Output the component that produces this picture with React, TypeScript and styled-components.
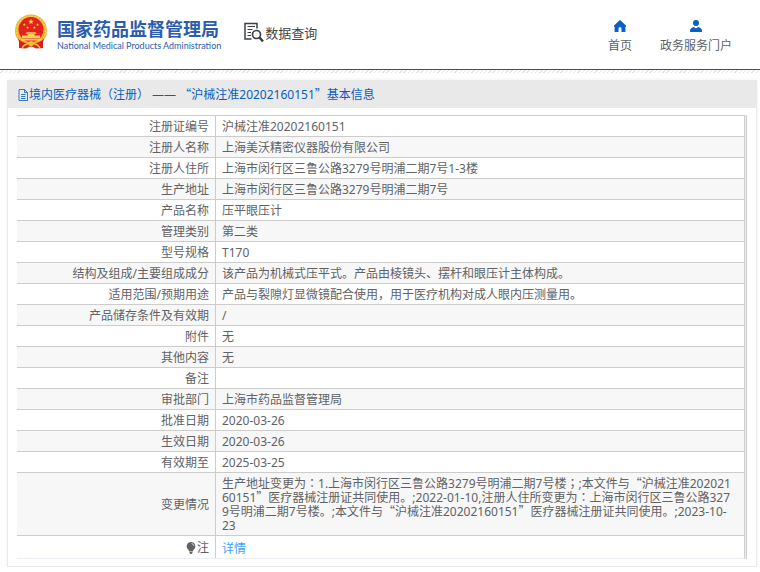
import React from 'react';
import styled, { createGlobalStyle } from 'styled-components';

const GlobalStyle = createGlobalStyle`
  * { box-sizing: border-box; }
  body {
    margin: 0;
    background: #fff;
    color: #606266;
    font: 12px/14px "Noto Sans", "Noto Sans CJK SC", sans-serif;
  }
  a { text-decoration: none; }
`;

const Header = styled.header`
  display: flex;
  align-items: flex-start;
  height: 70px;
  padding: 14px 28px 0 14px;
  border-bottom: 1px solid #0a5cad;
`;

const Brand = styled.a`
  display: flex;
  align-items: flex-start;
  gap: 9px;
  color: #2b5cad;
`;

const BrandText = styled.span`
  display: flex;
  flex-direction: column;
  padding-top: 4px;
`;

const BrandName = styled.span`
  font: 700 18px/20px "Noto Sans CJK SC", sans-serif;
`;

const BrandLatin = styled.span`
  font: 400 9px/15px Lato, sans-serif;
`;

const SectionTitle = styled.h1`
  display: flex;
  align-items: center;
  margin: 8px 0 0 23px;
  color: #444;
  font: 400 13px/18px "Noto Sans CJK SC", sans-serif;
`;

const Nav = styled.nav`
  display: flex;
  gap: 28px;
  margin-left: auto;
`;

const NavLink = styled.a`
  display: flex;
  flex-direction: column;
  align-items: center;
  gap: 5px;
  padding-top: 6px;
  color: #606266;
  line-height: 18px;
`;

const Hatch = styled.div`
  height: 3px;
  background: repeating-linear-gradient(135deg, #fff 0 2px, #e4e4e4 2px 3px);
`;

const Panel = styled.main`
  margin: 7px 3px 0 7px;
  border: 1px solid #e9e9e9;
  border-top: 0;
  box-shadow: 0 0 4px rgba(0, 0, 0, 0.06);
`;

const PanelTitle = styled.h2`
  display: flex;
  align-items: center;
  height: 28px;
  margin: 0;
  padding: 2px 9px 0 10px;
  background: #e9e9e9;
  color: #0a5cbe;
  font-size: 12px;
  font-weight: 400;
  white-space: pre;
`;

const TableFrame = styled.div`
  margin: 7px 9px;
  padding-right: 1px;
  border-right: 1px solid #ccc;
  background: #ebeef5;
`;

const Table = styled.table`
  width: 100%;
  table-layout: fixed;
  border-spacing: 0;
  border-right: 1px solid #ccc;
  border-bottom: 1px solid #ebeef5;
  background: #fff;
`;

const Row = styled.tr`
  &:nth-child(even) { background: #f7f7f7; }
  &:last-child { background: #fff; }
`;

const Label = styled.th`
  width: 199px;
  padding: 4px 6px 2px;
  border-top: 1px solid #ccc;
  border-right: 1px solid #ccc;
  font-weight: 400;
  text-align: right;
`;

const Value = styled.td`
  padding: 4px 12px 2px 6px;
  border-top: 1px solid #ccc;
  word-break: break-all;
`;

const NoteLabel = styled.span`
  display: flex;
  align-items: center;
  justify-content: flex-end;
  gap: 1px;
  line-height: 16px;
`;

const DetailLink = styled.a`
  display: block;
  padding-top: 2px;
  color: #409eff;
  line-height: 14px;
`;

const Wide = styled.span`
  font-family: "Noto Sans CJK SC", sans-serif;
  line-height: 1px;
`;

const Centred = styled.span`
  font-family: "Noto Sans CJK TC", sans-serif;
  line-height: 1px;
`;

/* Curly quotes take a full cell; colons and semicolons sit mid-cell. */
function Prose({ text }: { text: string }) {
  return (
    <>
      {text.split(/([“”：；])/).map((part, i) => {
        if (/^[“”]$/.test(part)) return <Wide key={i}>{part}</Wide>;
        if (/^[：；]$/.test(part)) return <Centred key={i} lang="zh-TW">{part}</Centred>;
        return part;
      })}
    </>
  );
}

const star = (cx: number, cy: number, r: number) =>
  Array.from({ length: 10 }, (_, i) => {
    const d = i % 2 ? r * 0.4 : r;
    const a = (Math.PI / 5) * i - Math.PI / 2;
    return `${cx + d * Math.cos(a)},${cy + d * Math.sin(a)}`;
  }).join(' ');

const Emblem = () => (
  <svg width="34" height="36" viewBox="0 0 34 36" aria-hidden="true">
    <path d="M5 24 L5 34 L12 34.5 L17 32 L22 34.5 L29 34 L29 24Z" fill="#dc1f19" />
    <circle cx="17" cy="16.5" r="16" fill="#efb02c" />
    <circle cx="17" cy="16.5" r="14.4" fill="none" stroke="#f8d465" strokeWidth="1.4" strokeDasharray="2 1.2" />
    <circle cx="17" cy="15.5" r="12.4" fill="#e3221b" />
    <polygon points={star(17, 7.8, 3)} fill="#fbd84b" />
    {[[10.4, 10.6], [13.6, 13.6], [20.4, 13.6], [23.6, 10.6]].map(([x, y]) => (
      <polygon key={x} points={star(x, y, 1.6)} fill="#fbd84b" />
    ))}
    <path d="M12.5 18.2h9l1.2 1.6H11.3zM13.5 20h7v1.4h-7zM8 21.6h18v2.8H8zM6.8 25h20.4l-1 1.6H7.8z" fill="#f8d05a" />
    <path d="M4 24.5c4 4 8 5 13 5s9-1 13-5l-1.5 5c-3 2-7 3-11.5 3s-8.5-1-11.5-3z" fill="#dc1f19" />
    <path d="M8 34.5c1.5-4 5-5 9-5s7.5 1 9 5" fill="none" stroke="#f3bd3b" strokeWidth="1.4" />
    <circle cx="17" cy="29.5" r="2.6" fill="#f3bd3b" />
  </svg>
);

const QueryIcon = () => (
  <svg width="21" height="21" viewBox="0 0 21 21" fill="none" stroke="#3c3f4c" aria-hidden="true">
    <path d="M7.5 17H1V1.500h12v5" strokeWidth="1.5" />
    <path d="M3.5 4.500h7.500M3.500 7.500h5M3.500 10.500h3.500M3.500 13.500h3.500" strokeWidth="1.1" />
    <circle cx="12.500" cy="12.500" r="4" strokeWidth="1.7" />
    <path d="M15.500 15.500l3.500 4" strokeWidth="2.500" />
  </svg>
);

const HomeIcon = () => (
  <svg width="12" height="12" viewBox="0 0 12 12" aria-hidden="true">
    <path d="M6 0L0 5.500v1h.6V12H4.500V8.500a1.500 1.500 0 0 1 3 0V12h3.900V6.500h.6v-1z" fill="#0a5fc4" />
  </svg>
);

const PersonIcon = () => (
  <svg width="12" height="12" viewBox="0 0 12 12" fill="#0a5fc4" aria-hidden="true">
    <circle cx="6" cy="3" r="3" />
    <path d="M0 12V10.500C0 8.500 2 7.500 4 7l2 1.500L8 7c2 .5 4 1.500 4 3.500V12z" />
  </svg>
);

const DocumentIcon = () => (
  <svg width="11" height="12" viewBox="0 0 11 12" fill="none" stroke="#0a5cbe" aria-hidden="true">
    <path d="M1 .5h5.500l3 3v8H1zM6.500.5v3h3M3 5.500h4.500M3 7.500h4.500M3 9.500h4.500" strokeWidth=".8" />
  </svg>
);

const BulbIcon = () => (
  <svg width="10" height="12" viewBox="0 0 10 12" fill="#606266" aria-hidden="true">
    <path d="M5 0a4.300 4.300 0 0 0-2.500 7.800L3.200 9.500h3.600l.7-1.700A4.300 4.300 0 0 0 5 0zM3.500 10h3v1l-1 1h-1l-1-1z" />
    <path d="M5.500 1.500c1.200.2 2 1 2.200 2.200" fill="none" stroke="#fff" strokeWidth=".8" />
  </svg>
);

const records: [string, string][] = [
  ['注册证编号', '沪械注准20202160151'],
  ['注册人名称', '上海美沃精密仪器股份有限公司'],
  ['注册人住所', '上海市闵行区三鲁公路3279号明浦二期7号1-3楼'],
  ['生产地址', '上海市闵行区三鲁公路3279号明浦二期7号'],
  ['产品名称', '压平眼压计'],
  ['管理类别', '第二类'],
  ['型号规格', 'T170'],
  ['结构及组成/主要组成成分', '该产品为机械式压平式。产品由棱镜头、摆杆和眼压计主体构成。'],
  ['适用范围/预期用途', '产品与裂隙灯显微镜配合使用，用于医疗机构对成人眼内压测量用。'],
  ['产品储存条件及有效期', '/'],
  ['附件', '无'],
  ['其他内容', '无'],
  ['备注', ''],
  ['审批部门', '上海市药品监督管理局'],
  ['批准日期', '2020-03-26'],
  ['生效日期', '2020-03-26'],
  ['有效期至', '2025-03-25'],
  ['变更情况', '生产地址变更为：1.上海市闵行区三鲁公路3279号明浦二期7号楼；;本文件与“沪械注准20202160151”医疗器械注册证共同使用。;2022-01-10,注册人住所变更为：上海市闵行区三鲁公路3279号明浦二期7号楼。;本文件与“沪械注准20202160151”医疗器械注册证共同使用。;2023-10-23'],
];

export default function App() {
  return (
    <>
      <GlobalStyle />
      <Header>
        <Brand href="#">
          <Emblem />
          <BrandText>
            <BrandName>国家药品监督管理局</BrandName>
            <BrandLatin>National Medical Products Administration</BrandLatin>
          </BrandText>
        </Brand>
        <SectionTitle><QueryIcon />数据查询</SectionTitle>
        <Nav>
          <NavLink href="#"><HomeIcon />首页</NavLink>
          <NavLink href="#"><PersonIcon />政务服务门户</NavLink>
        </Nav>
      </Header>
      <Hatch />
      <Panel>
        <PanelTitle>
          <DocumentIcon />
          <span><Prose text="境内医疗器械（注册） —— “沪械注准20202160151”基本信息" /></span>
        </PanelTitle>
        <TableFrame>
          <Table>
            <tbody>
              {records.map(([label, value]) => (
                <Row key={label}>
                  <Label scope="row">{label}</Label>
                  <Value><Prose text={value} /></Value>
                </Row>
              ))}
              <Row>
                <Label scope="row"><NoteLabel><BulbIcon />注</NoteLabel></Label>
                <Value><DetailLink href="#">详情</DetailLink></Value>
              </Row>
            </tbody>
          </Table>
        </TableFrame>
      </Panel>
    </>
  );
}
